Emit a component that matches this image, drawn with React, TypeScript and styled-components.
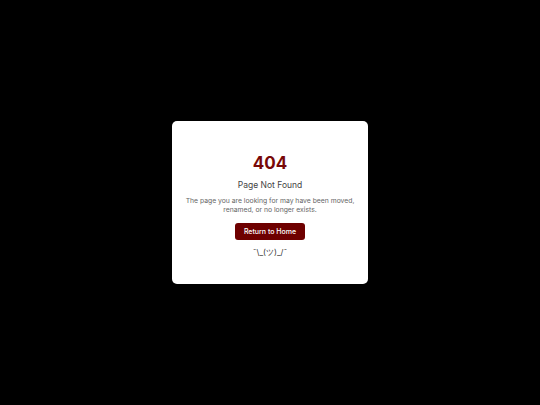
import styled, { createGlobalStyle } from "styled-components";

const GlobalStyle = createGlobalStyle`
    html, body {
        margin: 0;
        padding: 0;
        background: #000;
        font-family: Inter, "Noto Sans", sans-serif;
        -webkit-font-smoothing: antialiased;
    }
`

export default function App() {
    return (<>
        <GlobalStyle />
        <Page>
            <Card>
                <Code>404</Code>
                <Title>Page Not Found</Title>
                <Message>The page you are looking for may have been moved, renamed, or no longer exists.</Message>
                <HomeButton href="#">Return to Home</HomeButton>
                <Shrug>¯\_(ツ)_/¯</Shrug>
            </Card>
        </Page>
    </>);
}

const Page = styled.div`
    width: 540px;
    height: 405px;
    display: flex;
    align-items: center;
    justify-content: center;
`

const Card = styled.div`
    width: 196px;
    height: 163px;
    box-sizing: border-box;
    background: #fff;
    border-radius: 5px;
    padding: 31px 10px 0;
    display: flex;
    flex-direction: column;
    align-items: center;
    text-align: center;
`

const Code = styled.h1`
    margin: 0;
    font-size: 17px;
    line-height: 22px;
    font-weight: 700;
    color: #780808;
`

const Title = styled.h2`
    margin: 6px 0 0;
    font-size: 8.5px;
    line-height: 11px;
    font-weight: 400;
    color: #444;
`

const Message = styled.p`
    margin: 5px 0 0;
    font-size: 6.8px;
    line-height: 9px;
    color: #666;
`

const HomeButton = styled.a`
    margin-top: 9px;
    display: inline-block;
    background: #6e0000;
    color: #fff;
    font-size: 7px;
    font-weight: 500;
    line-height: 17px;
    padding: 0 8.5px;
    border-radius: 3px;
    text-decoration: none;
`

const Shrug = styled.div`
    margin-top: 7px;
    font-size: 8px;
    line-height: 10px;
    color: #333;
`
